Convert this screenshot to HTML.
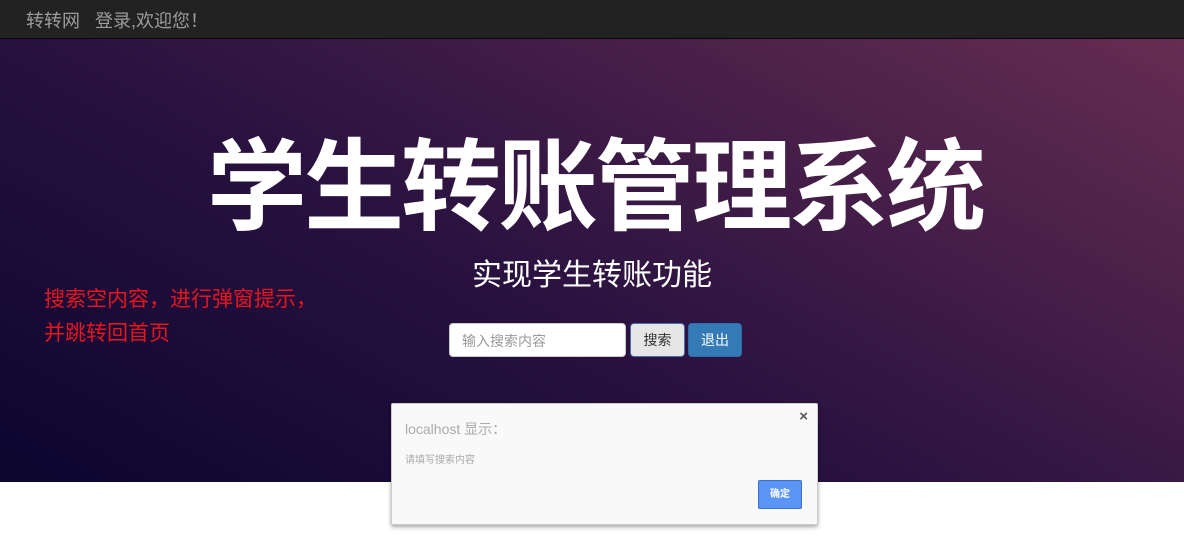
<!DOCTYPE html>
<html><head><meta charset="utf-8"><style>
*{margin:0;padding:0;box-sizing:border-box}
body{width:1184px;height:537px;background:#fff;font-family:"Liberation Sans","Noto Sans CJK SC",sans-serif;position:relative;overflow:hidden}
.nav{position:absolute;left:0;top:0;width:1184px;height:39px;background:#222;border-bottom:1px solid #080808}
.nav span{position:absolute;top:7px;color:#9d9d9d;font-size:18px}
.hero{position:absolute;left:0;top:39px;width:1184px;height:443px;background:linear-gradient(28deg,#0b0530 0%,#2a1240 45%,#662d52 100%)}
.t{position:absolute;left:0;width:1184px;text-align:center;color:#fff}
.red{position:absolute;left:44px;color:#e8151d;font-size:21px}
.inp{position:absolute;left:449px;top:323px;width:177px;height:34px;background:#fff;border:1px solid #ccc;border-radius:4px;color:#999;font-size:14px;padding:7px 12px}
.b1{position:absolute;left:630px;top:323px;width:55px;height:34px;background:#e6e6e6;border:1px solid #4a6fb0;border-radius:4px;font-size:14px;color:#333;text-align:center;line-height:32px}
.b2{position:absolute;left:688px;top:323px;width:54px;height:34px;background:#337ab7;border:1px solid #2e6da4;border-radius:4px;font-size:14px;color:#fff;text-align:center;line-height:32px}
.dlg{position:absolute;left:391px;top:403px;width:427px;height:122px;background:#f9f9f9;border:1px solid #ccc;border-radius:2px;box-shadow:0 2px 4px rgba(0,0,0,.35)}
</style></head><body>
<div class="nav"><span style="left:26px">转转网</span><span style="left:95px">登录,欢迎您！</span></div>
<div class="hero"></div>
<div class="t" style="top:132px;font-size:100px;font-weight:bold;line-height:112px;letter-spacing:-3px;padding-left:6px">学生转账管理系统</div>
<div class="t" style="top:257px;font-size:30px;line-height:38px">实现学生转账功能</div>
<div class="red" style="top:283px">搜索空内容，进行弹窗提示，</div>
<div class="red" style="top:317px">并跳转回首页</div>
<div class="inp">输入搜索内容</div>
<div class="b1">搜索</div>
<div class="b2">退出</div>
<div class="dlg">
<div style="position:absolute;left:13px;top:15px;font-size:14px;color:#aaa">localhost 显示：</div>
<div style="position:absolute;right:9px;top:4px;font-size:15px;color:#555;font-weight:bold">×</div>
<div style="position:absolute;left:13px;top:47px;font-size:10px;color:#aaa">请填写搜索内容</div>
<div style="position:absolute;left:366px;top:76px;width:44px;height:29px;background:#5b96f6;border:1px solid #3b6fd0;border-radius:2px;color:#fff;font-size:10px;font-weight:bold;text-align:center;line-height:27px">确定</div>
</div>
</body></html>
